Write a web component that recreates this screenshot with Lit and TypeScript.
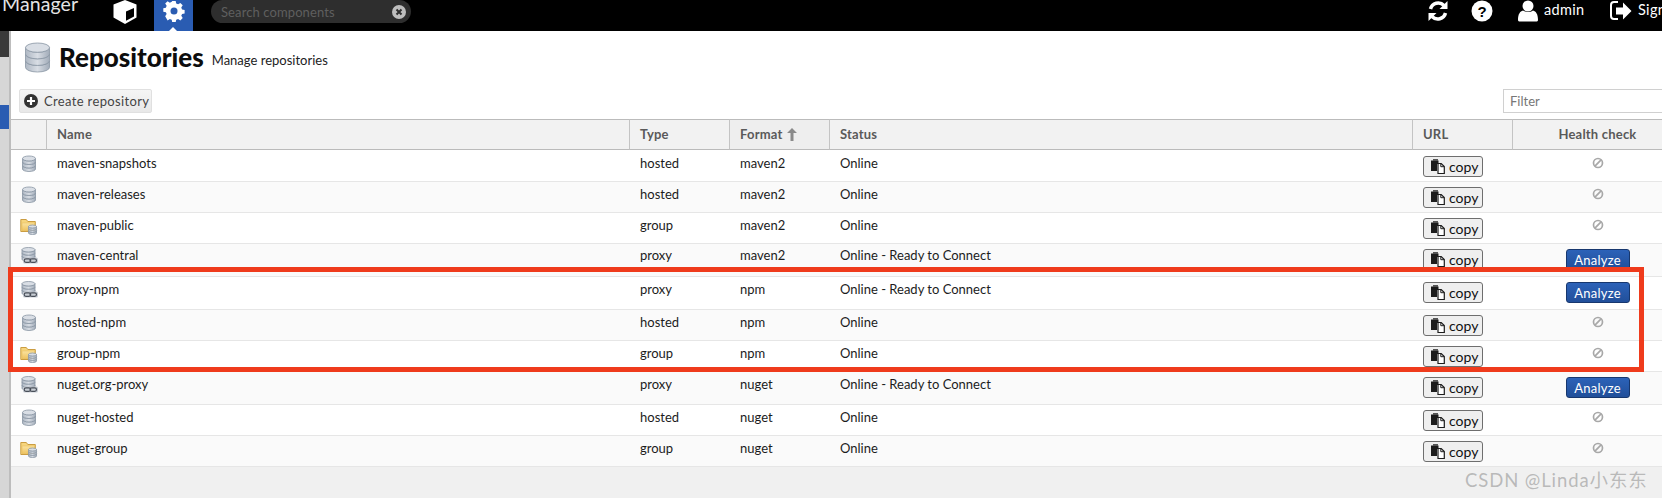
import { LitElement, html, css, svg } from "lit";
import { customElement } from "lit/decorators.js";

const dbBody = (x: number, y: number, w: number, h: number) => {
  const rx = w / 2, ry = h * 0.16;
  const cx = x + rx;
  const seg = (t: number, b: number) => svg`
    <path d="M${x} ${t}v${b - t}a${rx} ${ry} 0 0 0 ${w} 0v-${b - t}a${rx} ${ry} 0 0 1 -${w} 0z" fill="url(#dbg)" stroke="#8995a3" stroke-width=".8"/>`;
  const step = (h - 2 * ry) / 3;
  return svg`
    ${seg(y + ry + 2 * step, y + ry + 3 * step)}
    ${seg(y + ry + step, y + ry + 2 * step)}
    ${seg(y + ry, y + ry + step)}
    <ellipse cx=${cx} cy=${y + ry} rx=${rx} ry=${ry} fill="#d9dee5" stroke="#8995a3" stroke-width=".8"/>`;
};

const grads = svg`<defs>
  <linearGradient id="dbg" x1="0" x2="1" y1="0" y2="0"><stop offset="0" stop-color="#aeb7c3"/><stop offset=".5" stop-color="#d8dde4"/><stop offset="1" stop-color="#a2acb9"/></linearGradient>
  <linearGradient id="fld" x1="0" x2="0" y1="0" y2="1"><stop offset="0" stop-color="#fbe39f"/><stop offset="1" stop-color="#efc462"/></linearGradient>
</defs>`;

const hostedIcon = html`<svg class="ri" viewBox="0 0 18 18">${grads}${dbBody(2.5, 1, 13, 15.5)}</svg>`;
const groupIcon = html`<svg class="ri" viewBox="0 0 18 18">${grads}
  <path d="M.8 2.5h5.5l1.5 2h7.5v10H.8z" fill="#f6d57e" stroke="#c59433" stroke-width=".9"/>
  <path d="M2 6h12.5v7.5H2z" fill="url(#fld)" stroke="#e5b858" stroke-width=".5"/>
  ${dbBody(8.5, 8, 8, 9.5)}</svg>`;
const proxyIcon = html`<svg class="ri" viewBox="0 0 18 18">${grads}${dbBody(2, .5, 13, 14)}
  <rect x="3" y="10.500" width="15" height="6" rx="1.500" fill="#c9ced5"/>
  <g fill="none" stroke="#4a505a" stroke-width="1.200"><rect x="4.200" y="11.800" width="6.500" height="3.600" rx="1.800"/><rect x="10" y="11.800" width="6.500" height="3.600" rx="1.800"/></g></svg>`;
const icons: Record<string, unknown> = { hosted: hostedIcon, group: groupIcon, proxy: proxyIcon };

const disabledIcon = html`<svg class="dis" viewBox="0 0 12 12"><circle cx="6" cy="6" r="4.500" fill="none" stroke="#a8a8a8" stroke-width="1.700"/><path d="M2.900 9.100 9.100 2.900" stroke="#a8a8a8" stroke-width="1.700"/></svg>`;
const copyIcon = html`<svg class="cp" viewBox="0 0 14 15"><path d="M0 1.500h7.500V5H6v7H0z" fill="#1c1c1c"/><path d="M2 0h5v2H2z" fill="#555"/><path d="M7 4.500h3.200L13.300 7.500v7H7z" fill="#fff" stroke="#1c1c1c" stroke-width="1.200"/><path d="M9.800 4.500v3.200H13" fill="none" stroke="#1c1c1c" stroke-width="1"/></svg>`;

type Row = { n: string; t: string; f: string; s: string; h: number; p: number; btn: number; a: boolean };
const ON = "Online", RC = "Online - Ready to Connect";
const rows: Row[] = [
  { n: "maven-snapshots", t: "hosted", f: "maven2", s: ON, h: 32, p: 5, btn: 6, a: false },
  { n: "maven-releases", t: "hosted", f: "maven2", s: ON, h: 31, p: 4, btn: 5, a: false },
  { n: "maven-public", t: "group", f: "maven2", s: ON, h: 31, p: 4, btn: 5, a: false },
  { n: "maven-central", t: "proxy", f: "maven2", s: RC, h: 33, p: 3, btn: 5, a: true },
  { n: "proxy-npm", t: "proxy", f: "npm", s: RC, h: 33, p: 4, btn: 5, a: true },
  { n: "hosted-npm", t: "hosted", f: "npm", s: ON, h: 31, p: 4, btn: 5, a: false },
  { n: "group-npm", t: "group", f: "npm", s: ON, h: 31, p: 4, btn: 5, a: false },
  { n: "nuget.org-proxy", t: "proxy", f: "nuget", s: RC, h: 33, p: 4, btn: 5, a: true },
  { n: "nuget-hosted", t: "hosted", f: "nuget", s: ON, h: 31, p: 4, btn: 5, a: false },
  { n: "nuget-group", t: "group", f: "nuget", s: ON, h: 31, p: 4, btn: 5, a: false },
];

@customElement("app-root")
export class AppRoot extends LitElement {
  static styles = css`
    :host { display: block; width: 1662px; height: 498px; overflow: hidden; position: relative; font-family: "Lato", "Noto Sans", sans-serif; background: #f0f0f0; color: #111; }
    .top { height: 31px; background: #000; display: flex; align-items: flex-start; position: relative; color: #fff; white-space: nowrap; }
    .brand { font-size: 19.5px; font-weight: 400; letter-spacing: .1px; color: #e4e4e4; margin: -8px 0 0 2px; width: 111px; line-height: 24px; flex: none; }
    .cube { width: 24px; height: 24px; margin-right: 17px; flex: none; }
    .tab { width: 39px; height: 31px; background: #2a5cb2; position: relative; display: flex; justify-content: center; flex: none; }
    .tab svg { width: 22px; height: 22px; }
    .notch { position: absolute; left: 15px; bottom: 0; width: 0; height: 0; border: 4.5px solid transparent; border-bottom-color: #fff; border-top: 0; }
    .search { margin-left: 18px; width: 200px; height: 23px; border-radius: 12px; background: #2e2e2e; display: flex; align-items: center; justify-content: space-between; padding: 0 5px 0 10px; box-sizing: border-box; font-size: 13px; color: #5f5f5f; letter-spacing: .1px; flex: none; }
    .search svg { width: 14px; height: 14px; }
    .right { margin-left: auto; display: flex; align-items: flex-start; width: 235px; flex: none; overflow: hidden; }
    .right svg { display: block; flex: none; }
    .u1 { width: 22px; height: 22px; margin-right: 22px; }
    .u2 { width: 22px; height: 22px; margin-right: 25px; }
    .u3 { width: 20px; height: 22px; margin-right: 6px; }
    .admin { font-size: 14.5px; width: 66px; line-height: 20px; letter-spacing: .3px; flex: none; }
    .u4 { width: 22px; height: 22px; margin-right: 6px; }
    .sign { font-size: 14.5px; line-height: 20px; letter-spacing: .3px; flex: none; }

    .body { display: flex; height: 467px; }
    .side { width: 9px; flex: none; background: #d6d6d6; display: flex; flex-direction: column; border-right: 2px solid #bdbdbd; }
    .side i { display: block; }
    .s1 { height: 26px; background: #3a3a3a; }
    .s2 { height: 48px; }
    .s3 { height: 24px; background: #2a5cb2; }
    .main { width: 1700px; flex: none; display: flex; flex-direction: column; background: #fff; }
    .title { height: 58px; display: flex; align-items: flex-start; padding-left: 13px; }
    .title svg { width: 27px; height: 31px; margin: 11px 8px 0 0; }
    .title h1 { font-size: 26px; font-weight: 900; margin: 10px 8px 0 0; line-height: 32px; color: #0d0d0d; }
    .title span { font-size: 13px; margin-top: 19px; line-height: 20px; color: #222; }
    .bar { height: 30px; display: flex; align-items: flex-start; padding-left: 8px; }
    .create { width: 133px; height: 24px; box-sizing: border-box; border: 1px solid #e0e0e0; border-radius: 2px; background: linear-gradient(#f5f5f5, #e8e8e8); display: flex; align-items: center; padding-left: 4px; gap: 6px; font-size: 13px; color: #444; letter-spacing: .35px; flex: none; }
    .create svg { width: 14px; height: 14px; }
    .filter { margin-left: 1351px; width: 180px; height: 24px; box-sizing: border-box; border: 1px solid #d0d0d0; background: #fff; font-size: 13px; color: #777; padding: 3px 6px; flex: none; }
    .grid { display: grid; grid-template-columns: 36px 583px 100px 100px 583px 100px 169px; font-size: 13px; background: #f0f0f0; }
    .hd { height: 31px; box-sizing: border-box; background: #f2f2f2; border-top: 1px solid #bbb; border-bottom: 1px solid #bbb; border-right: 1px solid #c4c4c4; font-weight: 700; color: #5a5a5a; padding: 6px 0 0 10px; display: flex; letter-spacing: .2px; gap: 4px; }
    .hd.sorted { background: #eeeeee; }
    .hd.c { justify-content: center; padding-left: 0; border-right: 0; }
    .hd svg { width: 10px; height: 13px; margin-top: 2px; }
    .row { display: contents; }
    .cell { border-bottom: 1px solid #e6e6e6; box-sizing: border-box; padding-left: 10px; line-height: 16px; color: #1c1c1c; white-space: nowrap; background: #fff; }
    .row.odd .cell { background: #fafafa; }
    .icon { padding-left: 9px; }
    .ri { width: 18px; height: 18px; display: block; }
    .act { display: flex; justify-content: center; }
    .dis { width: 12px; height: 12px; margin-top: 1px; }
    .copy { width: 60px; height: 21px; box-sizing: border-box; border: 1px solid #6e6e6e; border-radius: 3px; background: #efefef; display: flex; align-items: center; padding-left: 7px; gap: 4px; font-size: 14px; color: #111; }
    .cp { width: 14px; height: 15px; flex: none; }
    .analyze { width: 64px; height: 21px; box-sizing: border-box; border: 1px solid #17376e; border-radius: 3px; background: linear-gradient(#2c62b8, #214f9a); color: #fff; font-size: 13px; display: flex; align-items: center; justify-content: center; letter-spacing: .25px; }
    .red { position: absolute; left: 8px; top: 267px; width: 1636px; height: 105px; box-sizing: border-box; border: 5px solid #ef3b1c; pointer-events: none; }
    .mark { position: absolute; left: 1465px; top: 469px; font-size: 18.5px; line-height: 22px; color: rgba(130,130,130,.5); font-family: "Lato", "Noto Sans CJK SC", sans-serif; letter-spacing: .9px; white-space: nowrap; }
    .fill { flex: 1; background: #f0f0f0; }
  `;

  render() {
    return html`
      <div class="top">
        <div class="brand">Manager</div>
        <svg class="cube" viewBox="0 0 24 24"><path d="M12 0 23.500 4.500v13L12 24 .5 17.500v-13z" fill="#fff"/><path d="M13 11.500 21 8v8.500l-8 4.200z" fill="#000"/></svg>
        <div class="tab">
          <svg viewBox="0 0 22 22"><path fill="#fff" fill-rule="evenodd" d="M9 0h4l.6 3 2.200.9 2.600-1.700 2.800 2.800-1.700 2.600.9 2.200 3 .6v4l-3 .6-.9 2.200 1.700 2.600-2.800 2.800-2.600-1.700-2.200.9-.6 3H9l-.6-3-2.200-.9-2.600 1.700L.8 17.800l1.700-2.600-.9-2.200-3-.6V8.400l3-.6.9-2.200L.8 3 3.600.2l2.600 1.700 2.200-.9z" transform="translate(1.500 1) scale(.86)"/><circle cx="11" cy="11" r="3.500" fill="#2a5cb2"/></svg>
          <div class="notch"></div>
        </div>
        <div class="search"><span>Search components</span>
          <svg viewBox="0 0 14 14"><circle cx="7" cy="7" r="7" fill="#bdbdbd"/><path d="M4.500 4.500l5 5m0-5l-5 5" stroke="#2e2e2e" stroke-width="2"/></svg></div>
        <div class="right">
          <svg class="u1" viewBox="0 0 22 22"><g fill="none" stroke="#fff" stroke-width="3.500"><path d="M3.500 9A8 8 0 0 1 17 5.500"/><path d="M18.500 13A8 8 0 0 1 5 16.500"/></g><path d="M20.500 1v8h-8zM1.500 21v-8h8z" fill="#fff"/></svg>
          <svg class="u2" viewBox="0 0 22 22"><circle cx="11" cy="11" r="10.500" fill="#fff"/><text x="11" y="16.500" text-anchor="middle" font-family="Liberation Sans" font-weight="700" font-size="15" fill="#000">?</text></svg>
          <svg class="u3" viewBox="0 0 20 22"><circle cx="10" cy="6" r="5.500" fill="#fff"/><path d="M0 20c0-6 2-8.500 5-9.500 3 2 7 2 10 0 3 1 5 3.500 5 9.500 0 1-1 1.500-2 1.500H2c-1 0-2-.5-2-1.500z" fill="#fff"/></svg>
          <div class="admin">admin</div>
          <svg class="u4" viewBox="0 0 22 22"><path d="M8 2H4a3 3 0 0 0-3 3v11a3 3 0 0 0 3 3h4" fill="none" stroke="#fff" stroke-width="2"/><path d="M6 7.500h7V2.500l8.500 8.500-8.500 8.500v-5H6z" fill="#fff"/></svg>
          <div class="sign">Sign out</div>
        </div>
      </div>
      <div class="body">
        <div class="side"><i class="s1"></i><i class="s2"></i><i class="s3"></i></div>
        <div class="main">
          <div class="title">
            <svg viewBox="0 0 27 31">${grads}${dbBody(1.5, 1, 24, 29)}</svg>
            <h1>Repositories</h1><span>Manage repositories</span>
          </div>
          <div class="bar">
            <div class="create"><svg viewBox="0 0 14 14"><circle cx="7" cy="7" r="7" fill="#333"/><path d="M7 3v8M3 7h8" stroke="#fff" stroke-width="2.200"/></svg>Create repository</div>
            <div class="filter">Filter</div>
          </div>
          <div class="grid">
            <div class="hd"></div>
            <div class="hd">Name</div>
            <div class="hd">Type</div>
            <div class="hd sorted">Format<svg viewBox="0 0 10 13"><path d="M5 0l5 5H6.500v8h-3V5H0z" fill="#8a8a8a"/></svg></div>
            <div class="hd">Status</div>
            <div class="hd">URL</div>
            <div class="hd c">Health check</div>
            ${rows.map((r, i) => html`
              <div class="row ${i % 2 ? "odd" : ""}">
                <div class="cell icon" style="height:${r.h}px;padding-top:${r.p}px">${icons[r.t]}</div>
                <div class="cell" style="height:${r.h}px;padding-top:${r.p}px">${r.n}</div>
                <div class="cell" style="height:${r.h}px;padding-top:${r.p}px">${r.t}</div>
                <div class="cell" style="height:${r.h}px;padding-top:${r.p}px">${r.f}</div>
                <div class="cell" style="height:${r.h}px;padding-top:${r.p}px">${r.s}</div>
                <div class="cell" style="height:${r.h}px;padding-top:${r.btn}px"><div class="copy">${copyIcon}copy</div></div>
                <div class="cell act" style="height:${r.h}px;padding-top:${r.btn}px;padding-left:0">${r.a ? html`<div class="analyze">Analyze</div>` : disabledIcon}</div>
              </div>`)}
          </div>
          <div class="fill"></div>
        </div>
      </div>
      <div class="red"></div>
      <div class="mark">CSDN @Linda小东东</div>
    `;
  }
}
